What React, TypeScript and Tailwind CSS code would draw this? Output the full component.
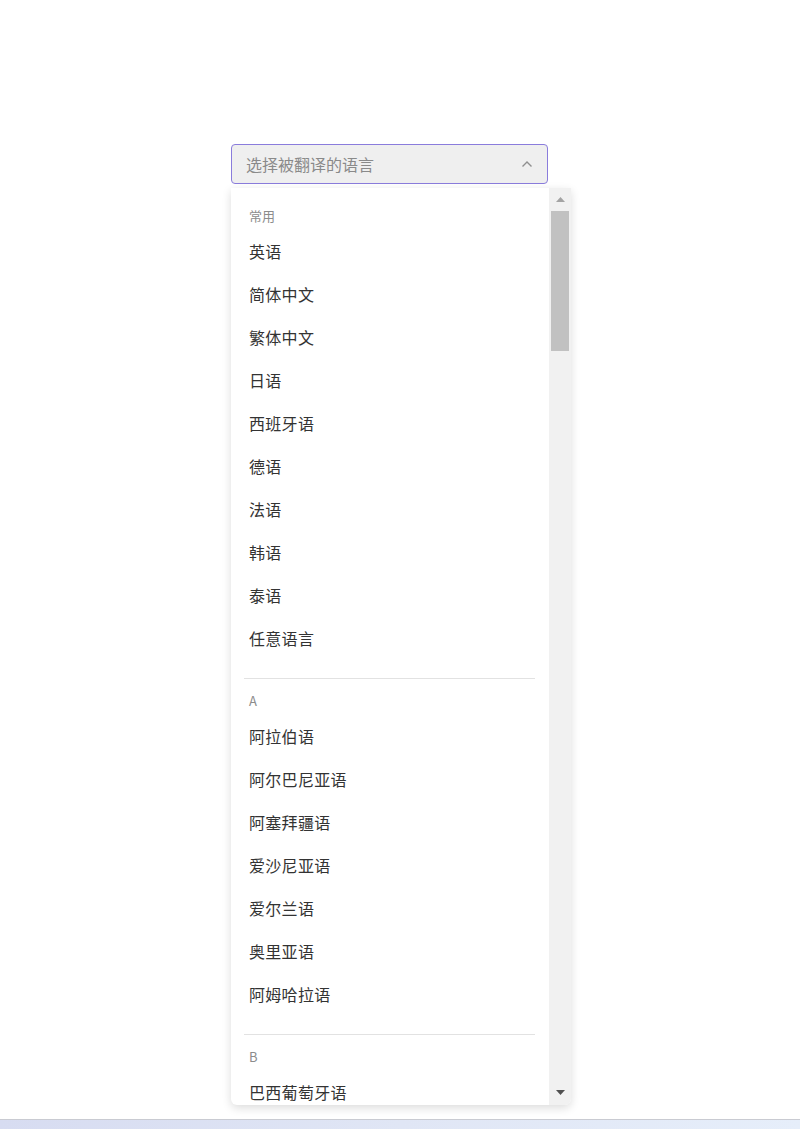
const common = ['英语', '简体中文', '繁体中文', '日语', '西班牙语', '德语', '法语', '韩语', '泰语', '任意语言'];
const groupA = ['阿拉伯语', '阿尔巴尼亚语', '阿塞拜疆语', '爱沙尼亚语', '爱尔兰语', '奥里亚语', '阿姆哈拉语'];
const groupB = ['巴西葡萄牙语'];

const Group = ({title, items, last}: {title: string; items: string[]; last?: boolean}) => (
  <div>
    <div className="pl-[18px] pt-[14px] pb-[5px] text-[13px] leading-[16px] text-[#8c8c8c]">{title}</div>
    {items.map((item) => (
      <div key={item} className="flex h-[43px] items-center pl-[18px] text-[16px] tracking-[0.3px] text-[#333333]">
        {item}
      </div>
    ))}
    {!last && <div className="mt-[19px] mr-[14px] ml-[13px] h-px bg-[#e2e2e2]" />}
  </div>
);

const App = () => {
  return (
    <div
      className="flex h-[1129px] flex-col overflow-hidden bg-white"
      style={{fontFamily: '"Noto Sans CJK SC", "Noto Sans", sans-serif'}}
    >
      <div className="flex-1 pt-[144px] pl-[231px]">
        <div className="relative w-[340px]">
          <div className="flex h-[40px] w-[317px] items-center justify-between rounded-[4px] border-[1.5px] border-[#8a7cdc] bg-[#efefef] pr-[14px] pl-[14px]">
            <span className="text-[16px] text-[#8a8a8a]">选择被翻译的语言</span>
            <svg width="12" height="8" viewBox="0 0 12 8" fill="none">
              <path d="M1.5 6.5 6 2l4.5 4.5" stroke="#8f8f8f" strokeWidth="1.4" />
            </svg>
          </div>
          <div className="absolute top-[44px] left-0 flex h-[917px] w-[340px] overflow-hidden rounded-b-[6px] bg-white shadow-[0_3px_10px_rgba(0,0,0,0.14)]">
            <div className="h-full w-[318px] overflow-hidden pt-[6px]">
              <Group title="常用" items={common} />
              <Group title="A" items={groupA} />
              <Group title="B" items={groupB} last />
            </div>
            <div className="flex h-full w-[22px] flex-col items-center bg-[#f1f1f1]">
              <div className="flex h-[23px] items-center justify-center">
                <svg width="9" height="5" viewBox="0 0 9 5">
                  <path d="M0 5 4.5 0 9 5Z" fill="#a3a3a3" />
                </svg>
              </div>
              <div className="h-[140px] w-[18px] bg-[#c1c1c1]" />
              <div className="flex-1" />
              <div className="flex h-[23px] items-center justify-center pb-[2px]">
                <svg width="9" height="5" viewBox="0 0 9 5">
                  <path d="M0 0 4.5 5 9 0Z" fill="#505050" />
                </svg>
              </div>
            </div>
          </div>
        </div>
      </div>
      <div className="h-px bg-[#c9cbd2]" />
      <div className="h-[9px] bg-gradient-to-r from-[#d7dcf1] via-[#e0e6f5] to-[#e6eefa]" />
    </div>
  );
};

export default App;
